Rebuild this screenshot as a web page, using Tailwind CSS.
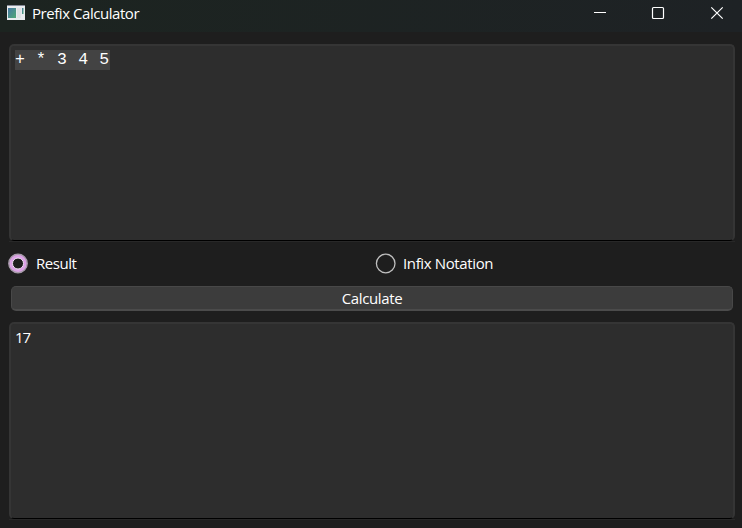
<!DOCTYPE html>
<html lang="en">
<head>
<meta charset="utf-8">
<title>Prefix Calculator</title>
<script src="https://cdn.jsdelivr.net/npm/@tailwindcss/browser@4"></script>
</head>
<body class="w-[742px] h-[528px] overflow-hidden bg-[#1e1e1e] text-white font-['Open_Sans','Noto_Sans',sans-serif] text-[15px] leading-5 flex flex-col">
  <header class="h-8 shrink-0 flex items-start bg-linear-to-r from-[#1c2420] to-[#1e2225]">
    <svg class="ml-[7px] mt-[5px] shrink-0" width="18" height="16" viewBox="0 0 18 16">
      <defs><linearGradient id="g" x1="0" y1="0" x2="1" y2="1"><stop offset="0" stop-color="#4678a4"/><stop offset="1" stop-color="#51a875"/></linearGradient></defs>
      <path d="M0 0h18v15H0z" fill="#e9ecee"/>
      <path d="M0 0h18v1H0z" fill="#858a96"/>
      <path d="M1 3h8v10H1z" fill="url(#g)"/>
      <path d="M10 3h4v10h-4z" fill="#dfe2e4"/>
      <path d="M15 3h1.5v6H15z" fill="url(#g)"/>
    </svg>
    <h1 class="ml-[7px] mt-[3px] grow whitespace-nowrap tracking-[-0.45px]">Prefix Calculator</h1>
    <svg class="shrink-0" width="154" height="32" viewBox="588 0 154 32" fill="none" stroke="#fff">
      <path d="M594 12.5h12"/>
      <rect x="652.5" y="7.5" width="11" height="11" rx="1" stroke-width="1.2"/>
      <path d="M711.3 7.3l11.4 11.4M722.7 7.3l-11.4 11.4" stroke-width="1.2"/>
    </svg>
  </header>
  <main class="flex flex-col pl-[9px] pr-[7px] pt-3">
    <section class="h-[198px] flex flex-col border-b border-[#282828]">
      <div class="h-[197px] rounded-[5px] border-2 border-[#353535] border-b-black border-b bg-[#2d2d2d] pt-[4px] pl-[4px]">
        <div class="w-[95px] h-5 bg-[#434343] font-['Liberation_Mono',monospace] text-[16.5px] leading-[19px] tracking-[0.62px] whitespace-pre">+ * 3 4 5</div>
      </div>
    </section>
    <div class="h-[44px] flex">
      <label class="w-[367px] flex items-center">
        <svg class="-ml-[1px] shrink-0 overflow-visible" width="20" height="20" viewBox="0 0 20 20"><circle cx="10" cy="9.5" r="9.2" fill="#dca2e6" stroke="#a79baa" stroke-width="1.4"/><circle cx="10" cy="9.5" r="5.5" fill="#1e1e1e" stroke="#f2e2f5" stroke-width="1"/></svg>
        <span class="ml-[8px] pb-[2px] tracking-[-0.45px]">Result</span>
      </label>
      <label class="flex items-center">
        <svg class="-ml-[1px] shrink-0 overflow-visible" width="21" height="20" viewBox="0 0 21 20"><circle cx="10.7" cy="9.5" r="9.3" fill="none" stroke="#c0c0c0" stroke-width="1.3"/></svg>
        <span class="ml-[7px] pb-[2px] tracking-[-0.37px]">Infix Notation</span>
      </label>
    </div>
    <button class="mx-[2px] h-[25px] rounded-[5px] border border-[#484848] border-b-2 border-b-[#4b4b4b] bg-[#3c3c3c] leading-[23px] tracking-[-0.35px]">Calculate</button>
    <section class="mt-[11px] h-[198px] border-b border-[#282828]">
      <div class="h-[197px] rounded-[5px] border-2 border-[#353535] border-b-black border-b bg-[#2d2d2d] pt-[3px] pl-[4px] tracking-[-1.2px]">17</div>
    </section>
  </main>
</body>
</html>
